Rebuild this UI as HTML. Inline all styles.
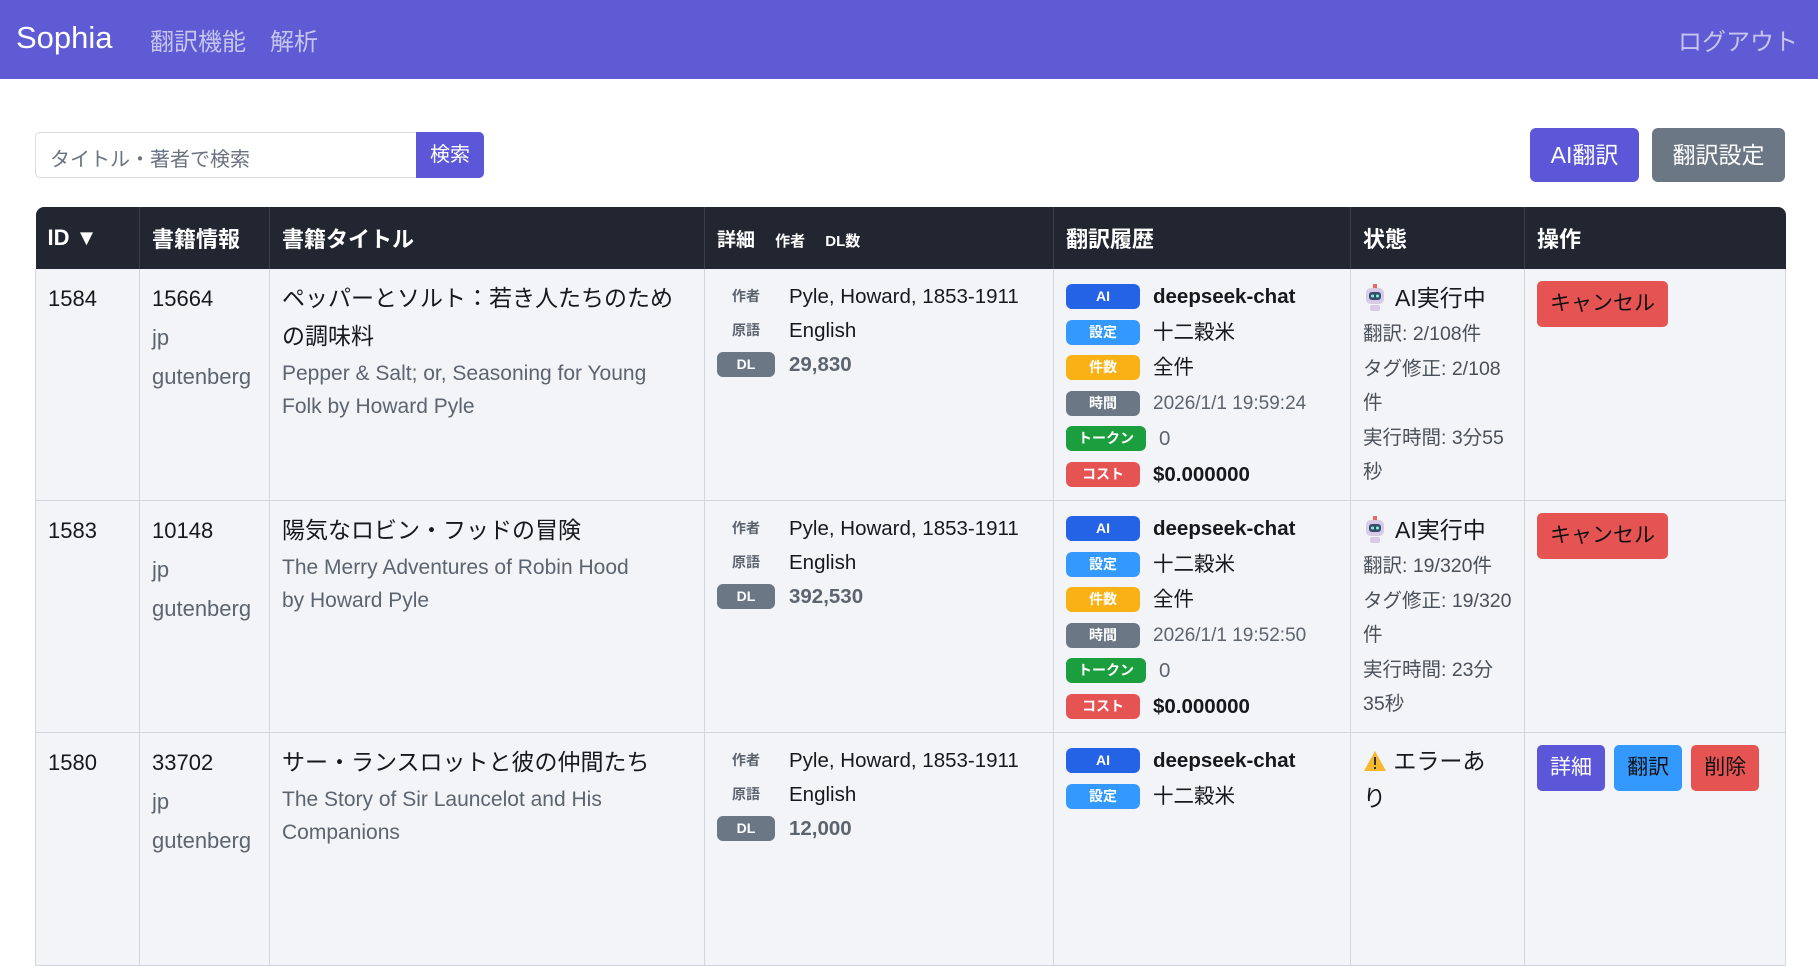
<!DOCTYPE html>
<html><head><meta charset="utf-8">
<style>
*{box-sizing:border-box;margin:0;padding:0}
body{width:1818px;height:820px;overflow:hidden;background:#fff;font-family:"Liberation Sans","Noto Sans CJK JP",sans-serif;color:#15181d}
.nav{height:79px;background:#5e5bd4;position:relative}
.nav .brand{position:absolute;left:16px;top:20px;font-size:31px;color:#fff}
.nav .l{position:absolute;top:22px;font-size:24px;color:#c6c5ee}
.search{position:absolute;left:35px;top:132px;width:449px;height:46px}
.search .in{position:absolute;left:0;top:0;width:382px;height:46px;border:1px solid #dadce2;border-radius:5px 0 0 5px;font-size:20px;color:#6b7280;padding:10px 14px}
.search .b{position:absolute;left:381px;top:0;width:68px;height:46px;background:#5b57d8;color:#fff;border-radius:0 5px 5px 0;font-size:20px;text-align:center;line-height:46px}
.btn{position:absolute;top:128px;height:54px;border-radius:6px;color:#fff;font-size:23px;text-align:center;line-height:54px}
table{position:absolute;left:35px;top:207px;width:1750px;border-collapse:collapse;table-layout:fixed}
th{background:#212631;color:#fff;text-align:left;font-size:22px;font-weight:bold;height:62px;padding:0 12px;border-right:1px solid #3a3f4a}
th:last-child{border-right:none}
thead tr th:first-child{border-top-left-radius:8px}
thead tr th:last-child{border-top-right-radius:8px}
td{background:#f3f4f7;vertical-align:top;padding:10px 12px 8px;font-size:22px;line-height:39px;border-right:1px solid #d2d5dc;border-bottom:1px solid #d2d5dc}
td:first-child{border-left:1px solid #d2d5dc}
.g{color:#5c6470}
.t{font-size:23px;line-height:38px}
.sub{color:#5c6470;font-size:21px;line-height:33px;margin-top:2px}
.dl{display:flex;align-items:center;height:34px}
.dl .k{width:58px;font-size:14px;color:#5c6470;text-align:center;font-weight:bold}
.dl .v{font-size:20.5px;margin-left:14px}
.bd{display:inline-block;height:25px;line-height:25px;border-radius:6px;color:#fff;font-size:14px;font-weight:bold;text-align:center;width:74px}
.h{display:flex;align-items:center;height:35.5px}
.h .v{margin-left:13px;font-size:20.5px}
.st{font-size:19.5px;line-height:34.5px;color:#4a505a}
.ab{display:inline-block;height:46px;line-height:46px;color:#111;font-size:21px;border-radius:5px;text-align:center;margin-top:2px}
</style></head><body>
<div class="nav"><div class="brand">Sophia</div><div class="l" style="left:150px">翻訳機能</div><div class="l" style="left:270px">解析</div><div class="l" style="right:20px">ログアウト</div></div>
<div class="search"><div class="in">タイトル・著者で検索</div><div class="b">検索</div></div>
<div class="btn" style="left:1530px;width:109px;background:#5b57d8">AI翻訳</div>
<div class="btn" style="left:1652px;width:133px;background:#6b7785">翻訳設定</div>
<table>
<colgroup><col style="width:104px"><col style="width:130px"><col style="width:435px"><col style="width:349px"><col style="width:297px"><col style="width:174px"><col style="width:261px"></colgroup>
<thead><tr><th>ID ▼</th><th>書籍情報</th><th>書籍タイトル</th><th><span style="font-size:19px">詳細</span> <span style="font-size:15px;margin-left:14px">作者</span> <span style="font-size:15px;margin-left:14px">DL数</span></th><th>翻訳履歴</th><th>状態</th><th>操作</th></tr></thead>
<tbody>
<tr>
<td>1584</td><td>15664<br><span class="g">jp<br>gutenberg</span></td>
<td><div class="t">ペッパーとソルト：若き人たちのための調味料</div><div class="sub">Pepper &amp; Salt; or, Seasoning for Young<br>Folk by Howard Pyle</div></td>
<td><div class="dl"><span class="k">作者</span><span class="v">Pyle, Howard, 1853-1911</span></div><div class="dl"><span class="k">原語</span><span class="v">English</span></div><div class="dl"><span class="bd" style="width:58px;background:#6b7785">DL</span><span class="v g" style="font-weight:bold">29,830</span></div></td>
<td><div class="h"><span class="bd" style="background:#2563e6">AI</span><span class="v" style="font-weight:bold">deepseek-chat</span></div><div class="h"><span class="bd" style="background:#3399ff">設定</span><span class="v">十二穀米</span></div><div class="h"><span class="bd" style="background:#f9b115">件数</span><span class="v">全件</span></div><div class="h"><span class="bd" style="background:#6b7785">時間</span><span class="v g" style="font-size:19px">2026/1/1 19:59:24</span></div><div class="h"><span class="bd" style="background:#1b9e3e;width:80px">トークン</span><span class="v g">0</span></div><div class="h"><span class="bd" style="background:#e55353">コスト</span><span class="v" style="font-weight:bold">$0.000000</span></div></td>
<td><div style="font-size:23px;display:flex;align-items:center;height:38px"><svg width="24" height="28" viewBox="0 0 24 28"><rect x="3" y="4" width="18" height="16" rx="5" fill="#d9c9e8"/><rect x="6" y="8" width="12" height="8" rx="3" fill="#3a4a6b"/><circle cx="9.5" cy="12" r="1.5" fill="#7fd"/><circle cx="14.5" cy="12" r="1.5" fill="#7fd"/><rect x="7" y="21" width="10" height="6" rx="2" fill="#d9c9e8"/><rect x="10" y="0" width="4" height="4" fill="#e66"/></svg><span style="margin-left:8px">AI実行中</span></div><div class="st">翻訳: 2/108件<br>タグ修正: 2/108件<br>実行時間: 3分55秒</div></td>
<td><span class="ab" style="width:131px;background:#e55353">キャンセル</span></td>
</tr>
<tr>
<td>1583</td><td>10148<br><span class="g">jp<br>gutenberg</span></td>
<td><div class="t">陽気なロビン・フッドの冒険</div><div class="sub">The Merry Adventures of Robin Hood<br>by Howard Pyle</div></td>
<td><div class="dl"><span class="k">作者</span><span class="v">Pyle, Howard, 1853-1911</span></div><div class="dl"><span class="k">原語</span><span class="v">English</span></div><div class="dl"><span class="bd" style="width:58px;background:#6b7785">DL</span><span class="v g" style="font-weight:bold">392,530</span></div></td>
<td><div class="h"><span class="bd" style="background:#2563e6">AI</span><span class="v" style="font-weight:bold">deepseek-chat</span></div><div class="h"><span class="bd" style="background:#3399ff">設定</span><span class="v">十二穀米</span></div><div class="h"><span class="bd" style="background:#f9b115">件数</span><span class="v">全件</span></div><div class="h"><span class="bd" style="background:#6b7785">時間</span><span class="v g" style="font-size:19px">2026/1/1 19:52:50</span></div><div class="h"><span class="bd" style="background:#1b9e3e;width:80px">トークン</span><span class="v g">0</span></div><div class="h"><span class="bd" style="background:#e55353">コスト</span><span class="v" style="font-weight:bold">$0.000000</span></div></td>
<td><div style="font-size:23px;display:flex;align-items:center;height:38px"><svg width="24" height="28" viewBox="0 0 24 28"><rect x="3" y="4" width="18" height="16" rx="5" fill="#d9c9e8"/><rect x="6" y="8" width="12" height="8" rx="3" fill="#3a4a6b"/><circle cx="9.5" cy="12" r="1.5" fill="#7fd"/><circle cx="14.5" cy="12" r="1.5" fill="#7fd"/><rect x="7" y="21" width="10" height="6" rx="2" fill="#d9c9e8"/><rect x="10" y="0" width="4" height="4" fill="#e66"/></svg><span style="margin-left:8px">AI実行中</span></div><div class="st">翻訳: 19/320件<br>タグ修正: 19/320件<br>実行時間: 23分35秒</div></td>
<td><span class="ab" style="width:131px;background:#e55353">キャンセル</span></td>
</tr>
<tr style="height:233px">
<td>1580</td><td>33702<br><span class="g">jp<br>gutenberg</span></td>
<td><div class="t">サー・ランスロットと彼の仲間たち</div><div class="sub">The Story of Sir Launcelot and His Companions</div></td>
<td><div class="dl"><span class="k">作者</span><span class="v">Pyle, Howard, 1853-1911</span></div><div class="dl"><span class="k">原語</span><span class="v">English</span></div><div class="dl"><span class="bd" style="width:58px;background:#6b7785">DL</span><span class="v g" style="font-weight:bold">12,000</span></div></td>
<td><div class="h"><span class="bd" style="background:#2563e6">AI</span><span class="v" style="font-weight:bold">deepseek-chat</span></div><div class="h"><span class="bd" style="background:#3399ff">設定</span><span class="v">十二穀米</span></div></td>
<td><div style="font-size:23px;line-height:37px"><svg width="24" height="22" viewBox="0 0 24 22" style="vertical-align:-3px"><path d="M12 1L23 21H1Z" fill="#f5b82e"/><rect x="11" y="7" width="2" height="8" fill="#333"/><rect x="11" y="17" width="2" height="2" fill="#333"/></svg> エラーあ<br>り</div></td>
<td><span class="ab" style="width:68px;background:#5b57d8;color:#fff">詳細</span> <span class="ab" style="width:68px;background:#3399ff;margin-left:3px">翻訳</span> <span class="ab" style="width:68px;background:#e55353;margin-left:3px">削除</span></td>
</tr>
</tbody></table>
</body></html>
